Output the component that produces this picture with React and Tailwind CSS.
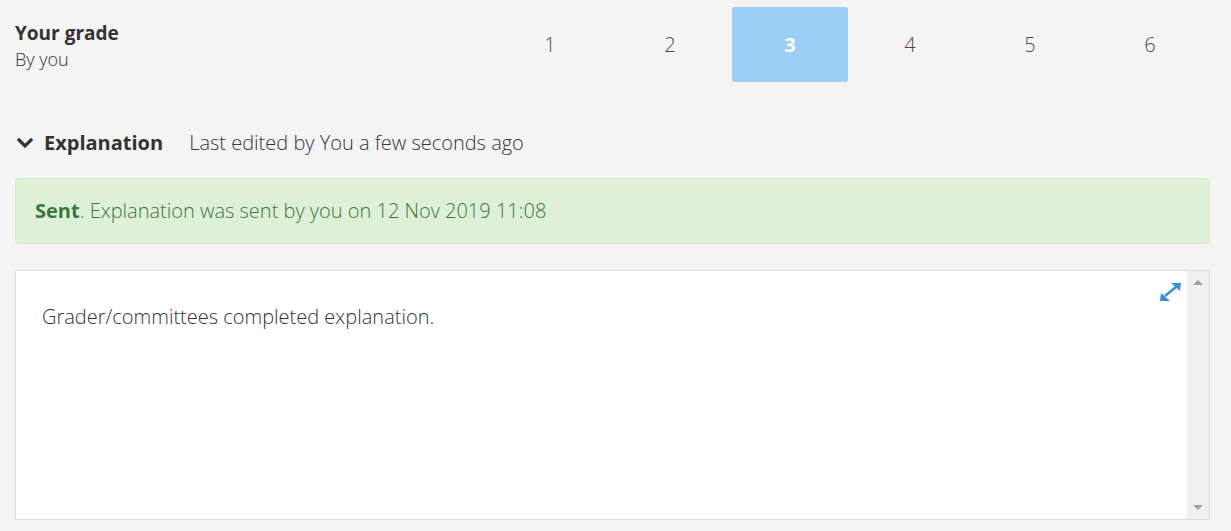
import React from "react";

function Chevron() {
  return (
    <svg width="16" height="12" viewBox="0 0 16 12" className="block">
      <path d="M2 3 L8 9 L14 3" fill="none" stroke="#333" strokeWidth="3.2" strokeLinecap="square" />
    </svg>
  );
}

function Expand() {
  return (
    <svg width="21" height="18" viewBox="0 0 21 18" className="block">
      <path d="M5 13 L16 4" stroke="#3b8ed8" strokeWidth="2.4" />
      <path d="M11 0 L21 0 L20 8 Z" fill="#3b8ed8" />
      <path d="M0 18 L1 10 L10 18 Z" fill="#3b8ed8" />
    </svg>
  );
}

export default function App() {
  const grades = [1, 2, 3, 4, 5, 6];
  return (
    <div
      className="min-h-screen bg-[#f4f4f4] pl-[15px] pr-[21px] text-[#333]"
      style={{ fontFamily: '"Open Sans", sans-serif' }}
    >
      <div className="flex h-[90px]">
        <div className="pt-[20px]">
          <div className="text-[19px] font-bold leading-[26px]">Your grade</div>
          <div className="text-[18px] font-light leading-[26px]">By you</div>
        </div>
        <div className="ml-auto flex w-[720px] pt-[7px]">
          {grades.map((g) => (
            <div key={g} className="h-[75px] w-[120px] px-[2px]">
              {g === 3 ? (
                <div className="flex h-full items-center justify-center rounded-[3px] bg-[#9bcff4] text-[20px] font-bold text-white">
                  {g}
                </div>
              ) : (
                <div className="flex h-full items-center justify-center text-[20px] font-light text-[#4a4a4a]">
                  {g}
                </div>
              )}
            </div>
          ))}
        </div>
      </div>

      <div className="mt-[38px] flex h-[30px] items-center">
        <div className="ml-[2px] mr-[11px]">
          <Chevron />
        </div>
        <span className="text-[20px] font-bold">Explanation</span>
        <span className="ml-[26px] text-[20px] font-light text-[#3a3340]">
          Last edited by You a few seconds ago
        </span>
      </div>

      <div className="mt-[20px] flex h-[66px] items-center rounded-[4px] border border-[#d3eacb] bg-[#dff0d8] px-[19px] text-[20px] font-light text-[#3c763d]">
        <span className="font-bold">Sent</span>. Explanation was sent by you on 12 Nov 2019 11:08
      </div>

      <div className="mt-[26px] flex h-[250px] border border-[#dcdcdc] bg-white">
        <div className="relative flex-1 pl-[26px] pt-[31px] text-[20px] font-light text-[#333]">
          Grader/committees completed explanation.
          <div className="absolute right-[6px] top-[12px]">
            <Expand />
          </div>
        </div>
        <div className="flex w-[22px] flex-col items-center justify-between bg-[#f0f0f0] py-[9px]">
          <div className="h-0 w-0 border-x-[5px] border-b-[5px] border-x-transparent border-b-[#a0a0a0]" />
          <div className="h-0 w-0 border-x-[5px] border-t-[5px] border-x-transparent border-t-[#a0a0a0]" />
        </div>
      </div>
    </div>
  );
}
